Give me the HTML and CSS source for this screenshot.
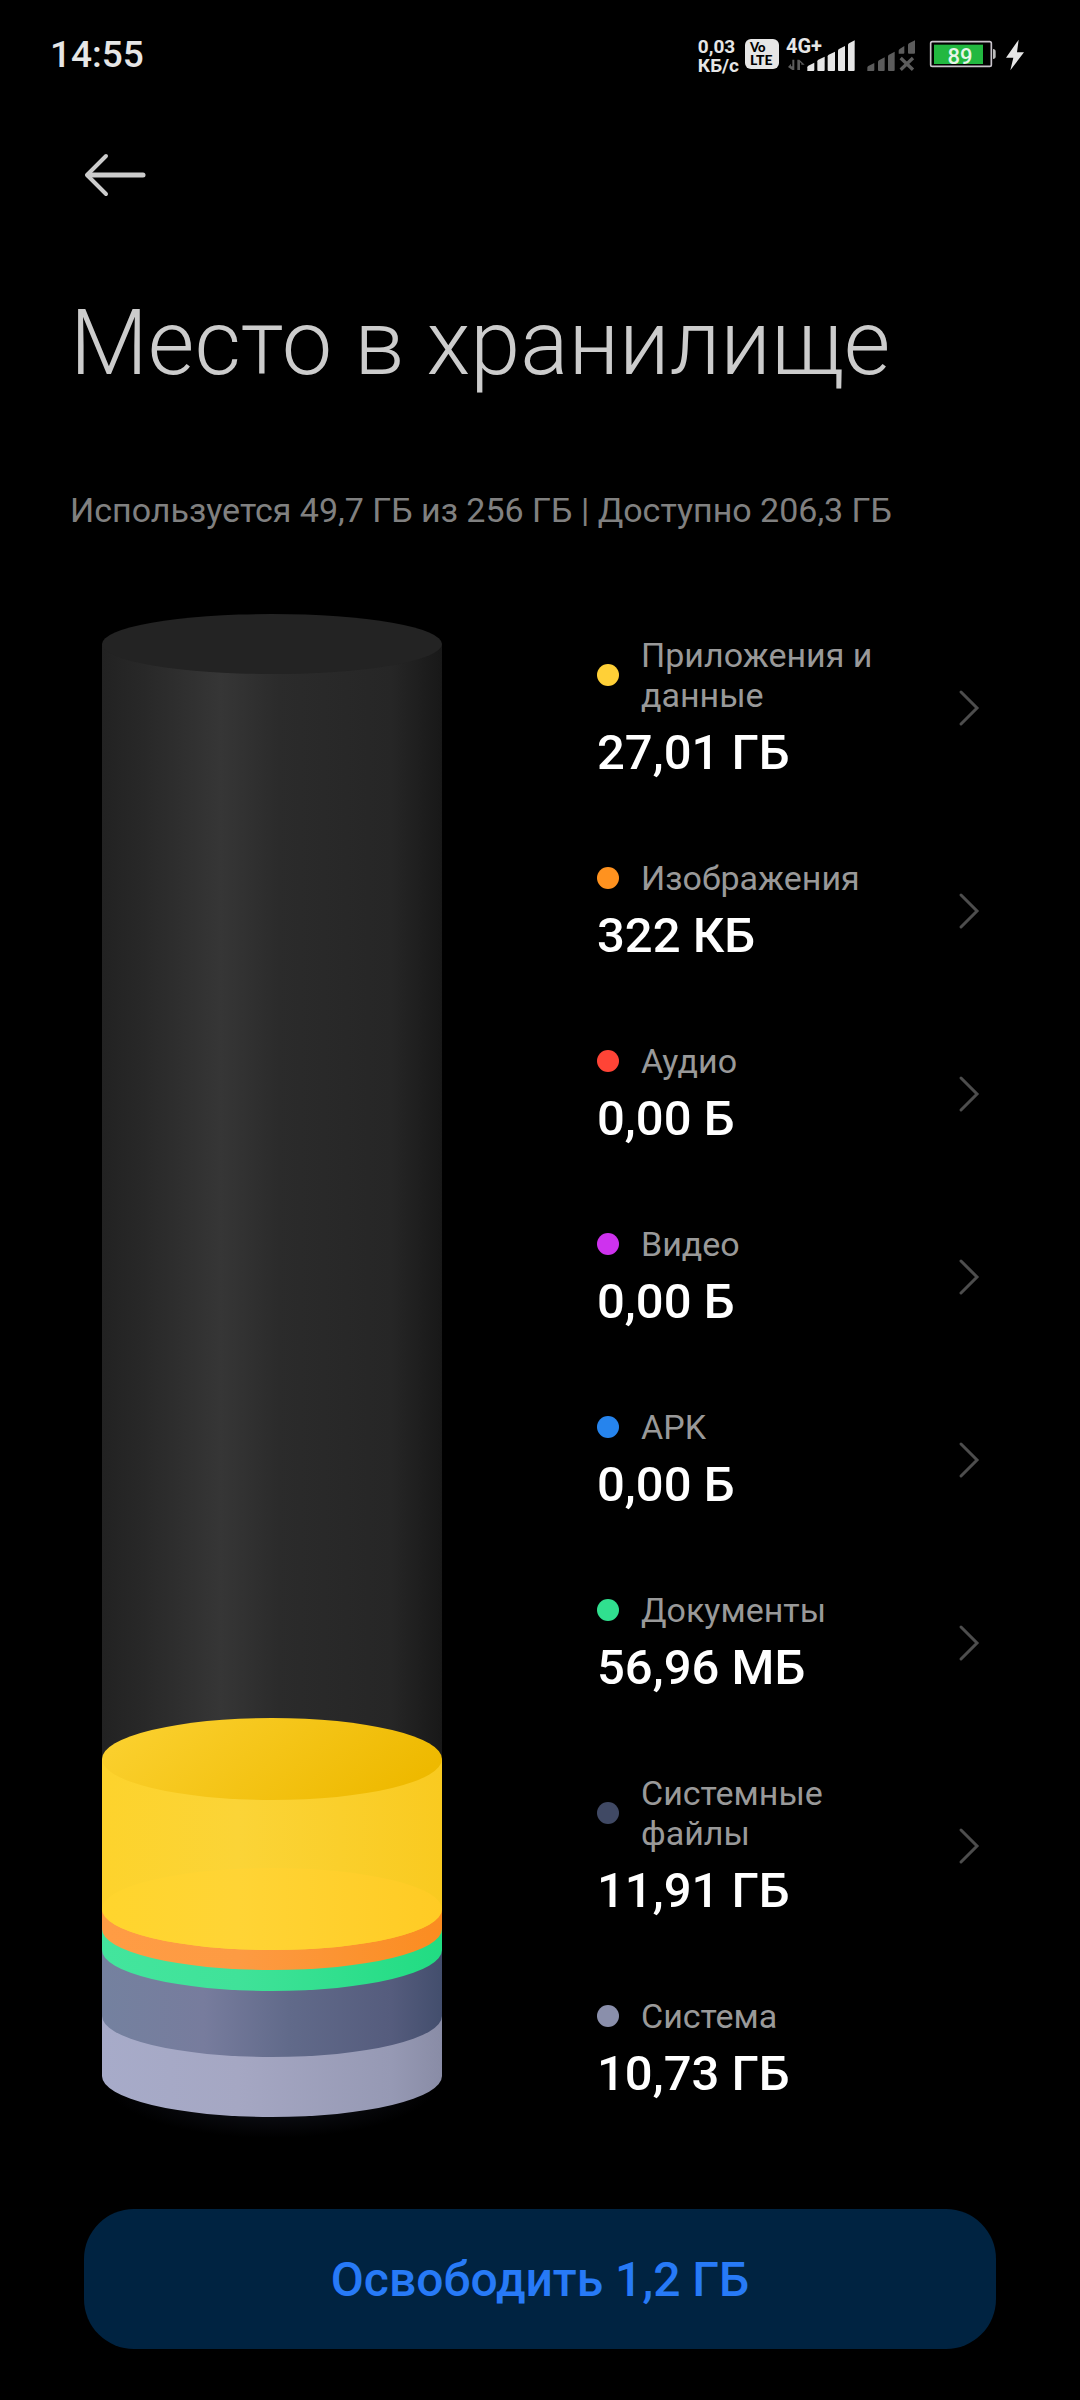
FILE: index.html
```html
<!DOCTYPE html>
<html lang="ru">
<head>
<meta charset="utf-8">
<meta name="viewport" content="width=device-width, initial-scale=1">
<title>Место в хранилище</title>
<link rel="stylesheet" href="styles.css">
</head>
<body>
<div class="status">
  <time class="clock">14:55</time>
  <div class="indicators">
    <div class="speed"><span>0,03</span><span>КБ/с</span></div>
    <div class="volte"><span class="volte-top">Vo</span><span class="volte-bottom">LTE</span></div>
    <svg class="signal" width="70" height="35" viewBox="318 48 210 105">
      <text class="net" x="318" y="96">4G+</text>
      <g fill="#5c5c5c">
        <path d="M337 116v20h-4v-8l-9 10l13 9h6v-31zM352 147v-31h6l16 15h-10v-4l-4-3v23z"/>
      </g>
      <g fill="#e6e6e6">
        <path d="M382 150v-11q0-3 3-5l18-9v22q0 3-3 3z"/>
        <path d="M412 147v-26q0-3 3-5l19-9v40q0 3-3 3h-16q-3 0-3-3z"/>
        <path d="M443 147v-41q0-3 3-5l19-9v55q0 3-3 3h-16q-3 0-3-3z"/>
        <path d="M474 147v-58q0-3 3-5l18-9v72q0 3-3 3h-15q-3 0-3-3z"/>
        <path d="M504 147v-75q0-3 3-5l17-9v89q0 3-3 3h-14q-3 0-3-3z"/>
      </g>
    </svg>
    <svg class="signal-off" width="50" height="35" viewBox="558 48 150 105" fill="#5c5c5c">
      <path d="M562 150v-10q0-3 3-5l18-9v21q0 3-3 3z"/>
      <path d="M594 147v-24q0-3 3-5l17-9v38q0 3-3 3h-14q-3 0-3-3z"/>
      <path d="M624 147v-41q0-3 3-5l17-9v55q0 3-3 3h-14q-3 0-3-3z"/>
      <path d="M656 98v-9q0-3 3-5l14-9v20q0 3-3 3z"/>
      <path d="M684 95v-23q0-3 3-5l18-9v37q0 3-3 3h-15q-3 0-3-3z"/>
      <path d="M662 111l37 35M699 111l-37 35" stroke="#5c5c5c" stroke-width="10"/>
    </svg>
    <svg class="battery" width="66" height="35" viewBox="750 48 198 105">
      <rect x="752" y="62" width="182" height="74" rx="5" fill="none" stroke="#c9c4cb" stroke-width="5"/>
      <rect x="762" y="71" width="147" height="58" fill="#22b840"/>
      <path d="M939 84q8 0 8 8v14q0 8-8 8z" fill="#bbb"/>
      <text class="level" x="840" y="128" text-anchor="middle">89</text>
    </svg>
    <svg class="bolt" width="18" height="35" viewBox="978 48 54 105">
      <path d="M1016 56l-38 54h22l-9 38 41-54h-21z" fill="#e6e6e6"/>
    </svg>
  </div>
</div>

<header class="header">
  <button class="back" type="button" aria-label="Назад">
    <svg width="62" height="44" viewBox="0 0 62 44" fill="none" stroke="#ccc" stroke-linecap="round" stroke-linejoin="round">
      <path d="M4 22H59" stroke-width="5"/><path d="M22 3L3 22L22 41" stroke-width="4"/>
    </svg>
  </button>
  <h1 class="title">Место в хранилище</h1>
  <p class="summary">Используется 49,7 ГБ из 256 ГБ | Доступно 206,3 ГБ</p>
</header>

<main class="storage">
  <svg class="cylinder" width="340" height="1526" viewBox="0 0 340 1526" role="img" aria-label="Распределение памяти">
    <defs>
      <linearGradient id="empty"><stop offset="0" stop-color="#222"/><stop offset=".12" stop-color="#282828"/><stop offset=".35" stop-color="#363636"/><stop offset=".52" stop-color="#2b2b2b"/><stop offset=".85" stop-color="#262626"/><stop offset="1" stop-color="#181818"/></linearGradient>
      <linearGradient id="apps"><stop offset="0" stop-color="#fdd32c"/><stop offset=".4" stop-color="#fbd437"/><stop offset="1" stop-color="#f9ca20"/></linearGradient>
      <linearGradient id="apps-top" x1="0" y1=".2" x2="1" y2=".5"><stop offset="0" stop-color="#fbd130"/><stop offset="1" stop-color="#eeb900"/></linearGradient>
      <linearGradient id="apps-base"><stop offset="0" stop-color="#ffd52d"/><stop offset=".4" stop-color="#ffd435"/><stop offset="1" stop-color="#ffcb24"/></linearGradient>
      <linearGradient id="images"><stop offset="0" stop-color="#ff9c44"/><stop offset=".4" stop-color="#fd9b43"/><stop offset="1" stop-color="#fb8c20"/></linearGradient>
      <linearGradient id="docs"><stop offset="0" stop-color="#43e59d"/><stop offset=".4" stop-color="#40e299"/><stop offset="1" stop-color="#21dc82"/></linearGradient>
      <linearGradient id="files"><stop offset="0" stop-color="#74819f"/><stop offset=".3" stop-color="#777c9d"/><stop offset=".55" stop-color="#616a8a"/><stop offset=".85" stop-color="#555c7d"/><stop offset="1" stop-color="#434e6d"/></linearGradient>
      <linearGradient id="system"><stop offset="0" stop-color="#a7abc9"/><stop offset=".4" stop-color="#a5a7c3"/><stop offset=".85" stop-color="#9699b4"/><stop offset="1" stop-color="#898ca6"/></linearGradient>
      <radialGradient id="glow"><stop offset="0" stop-color="#0d0f15"/><stop offset=".6" stop-color="#0a0b10"/><stop offset="1" stop-color="#000"/></radialGradient>
    </defs>
    <ellipse cx="170" cy="1470" rx="165" ry="54" fill="url(#glow)"/>
    <path d="M0 30V1145H340V30z" fill="url(#empty)"/>
    <ellipse cx="170" cy="30" rx="170" ry="30" fill="#232323"/>
    <path d="M0 1402V1462A170 41 0 0 0 340 1462V1402z" fill="url(#system)"/>
    <path d="M0 1336V1402A170 41 0 0 0 340 1402V1336z" fill="url(#files)"/>
    <path d="M0 1315V1336A170 41 0 0 0 340 1336V1315z" fill="url(#docs)"/>
    <path d="M0 1295V1315A170 41 0 0 0 340 1315V1295z" fill="url(#images)"/>
    <path d="M0 1145V1295A170 41 0 0 0 340 1295V1145z" fill="url(#apps)"/>
    <ellipse cx="170" cy="1295" rx="170" ry="41" fill="url(#apps-base)"/>
    <ellipse cx="170" cy="1145" rx="170" ry="41" fill="url(#apps-top)"/>
  </svg>

  <ul class="list">
    <li><a class="row" href="#apps"><span class="label"><i class="dot dot-apps"></i><span>Приложения и данные</span></span><strong class="value">27,01 ГБ</strong><svg class="chevron" width="20" height="36" viewBox="0 0 20 36"><path d="M2 2L18 18L2 34"/></svg></a></li>
    <li><a class="row" href="#images"><span class="label"><i class="dot dot-images"></i><span>Изображения</span></span><strong class="value">322 КБ</strong><svg class="chevron" width="20" height="36" viewBox="0 0 20 36"><path d="M2 2L18 18L2 34"/></svg></a></li>
    <li><a class="row" href="#audio"><span class="label"><i class="dot dot-audio"></i><span>Аудио</span></span><strong class="value">0,00 Б</strong><svg class="chevron" width="20" height="36" viewBox="0 0 20 36"><path d="M2 2L18 18L2 34"/></svg></a></li>
    <li><a class="row" href="#video"><span class="label"><i class="dot dot-video"></i><span>Видео</span></span><strong class="value">0,00 Б</strong><svg class="chevron" width="20" height="36" viewBox="0 0 20 36"><path d="M2 2L18 18L2 34"/></svg></a></li>
    <li><a class="row" href="#apk"><span class="label"><i class="dot dot-apk"></i><span>APK</span></span><strong class="value">0,00 Б</strong><svg class="chevron" width="20" height="36" viewBox="0 0 20 36"><path d="M2 2L18 18L2 34"/></svg></a></li>
    <li><a class="row" href="#docs"><span class="label"><i class="dot dot-docs"></i><span>Документы</span></span><strong class="value">56,96 МБ</strong><svg class="chevron" width="20" height="36" viewBox="0 0 20 36"><path d="M2 2L18 18L2 34"/></svg></a></li>
    <li><a class="row" href="#files"><span class="label"><i class="dot dot-files"></i><span>Системные файлы</span></span><strong class="value">11,91 ГБ</strong><svg class="chevron" width="20" height="36" viewBox="0 0 20 36"><path d="M2 2L18 18L2 34"/></svg></a></li>
    <li><div class="row"><span class="label"><i class="dot dot-system"></i><span>Система</span></span><strong class="value">10,73 ГБ</strong></div></li>
  </ul>
</main>

<footer class="footer">
  <button class="clean" type="button">Освободить 1,2 ГБ</button>
</footer>
</body>
</html>
```
FILE: styles.css
```css
* {
  box-sizing: border-box;
}

body {
  margin: 0;
  background: #000;
  color: #fff;
  font-family: Roboto, "Noto Sans", sans-serif;
}

svg {
  display: block;
  flex: none;
  overflow: visible;
}

.status {
  display: flex;
  justify-content: space-between;
  align-items: center;
  padding: 33px 56px 0 50px;
  color: #e6e6e6;
}

.clock {
  padding-top: 2px;
  font-size: 37px;
  font-weight: 500;
  line-height: 36px;
}

.indicators {
  display: flex;
  align-items: center;
}

.speed {
  display: flex;
  flex-direction: column;
  margin-right: 6px;
  padding-top: 4px;
  font-size: 19px;
  font-weight: 700;
  line-height: 19px;
}

.volte {
  display: flex;
  flex-direction: column;
  width: 34px;
  height: 30px;
  margin-right: 7px;
  padding: 3px 0 0 5px;
  border-radius: 6px;
  background: #e6e6e6;
  color: #000;
  font-family: Lato, sans-serif;
  font-weight: 900;
}

.volte-top {
  font-size: 13px;
  line-height: 11px;
}

.volte-bottom {
  font-size: 14px;
  line-height: 14px;
}

.net {
  fill: #e6e6e6;
  font-size: 60px;
  font-weight: 700;
}

.level {
  fill: #e6f5e8;
  font-size: 66px;
  font-weight: 500;
}

.signal-off {
  margin: 0 14px 0 10px;
}

.bolt {
  margin-left: 10px;
}

.header {
  padding: 78px 70px 0;
}

.back {
  display: block;
  margin: 0 0 94px 14px;
  padding: 0;
  border: 0;
  background: none;
}

.title {
  margin: 0 0 93px;
  color: #ccc;
  font-size: 90px;
  font-weight: 300;
  line-height: 106px;
}

.summary {
  margin: 0;
  color: #808080;
  font-size: 34px;
  line-height: 40px;
}

.storage {
  display: flex;
  justify-content: space-between;
  padding: 84px 101px 0 102px;
}

.list {
  display: flex;
  flex-direction: column;
  gap: 77px;
  width: 382px;
  margin: 0;
  padding: 21px 0 0;
  list-style: none;
}

.row {
  display: grid;
  grid-template-columns: 1fr 20px;
  column-gap: 58px;
  row-gap: 9px;
  align-items: center;
  color: inherit;
  text-decoration: none;
}

.label {
  display: flex;
  align-items: center;
  gap: 22px;
  color: #999;
  font-size: 34px;
  line-height: 40px;
}

.dot {
  flex: none;
  width: 22px;
  height: 22px;
  border-radius: 50%;
}

.dot-apps { background: #ffd037; }
.dot-images { background: #ff921f; }
.dot-audio { background: #ff4436; }
.dot-video { background: #ce32ee; }
.dot-apk { background: #2684ed; }
.dot-docs { background: #30e08f; }
.dot-files { background: #404964; }
.dot-system { background: #8a8fab; }

.value {
  grid-column: 1;
  font-size: 49px;
  font-weight: 500;
  line-height: 57px;
}

.chevron {
  grid-column: 2;
  grid-row: 1 / 3;
  fill: none;
  stroke: #4d4d4d;
  stroke-width: 3;
  stroke-linecap: round;
}

.footer {
  padding: 69px 84px 51px;
}

.clean {
  display: block;
  width: 100%;
  padding: 43px 20px 41px;
  border: 0;
  border-radius: 50px;
  background: #002341;
  color: #277af7;
  font-family: inherit;
  font-size: 48px;
  font-weight: 500;
  line-height: 56px;
}
```
